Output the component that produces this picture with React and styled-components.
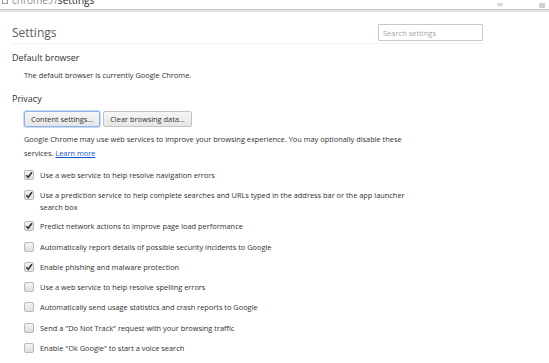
import React from 'react';
import styled, { createGlobalStyle } from 'styled-components';

const GlobalStyle = createGlobalStyle`
    html, body {
        margin: 0;
        padding: 0;
        background: #fff;
    }
    body {
        font-family: "Open Sans", "Noto Sans", sans-serif;
        color: #303030;
    }
`;

const AddressBar = styled.div`
    height: 9px;
    overflow: hidden;
    display: flex;
    align-items: flex-end;
    justify-content: space-between;
    padding: 0 4px 0 2px;
    border-bottom: 1px solid #c9c9c9;
`;

const Url = styled.div`
    font-size: 10px;
    line-height: 12px;
    margin-bottom: 3px;
    color: #8a8a8a;
    display: flex;
    align-items: center;
    gap: 4px;
    b {
        font-weight: 400;
        color: #222;
    }
`;

const ToolbarShadow = styled.div`
    height: 2px;
    background: #e4e4e4;
`;

const Page = styled.div`
    padding: 0 66px 0 12px;
`;

const Header = styled.header`
    display: flex;
    justify-content: space-between;
    align-items: center;
    padding: 12px 0 2px;
    border-bottom: 1px solid #eef4f4;
`;

const Title = styled.h1`
    margin: 0;
    font-size: 12px;
    line-height: 17px;
    font-weight: 400;
    color: #5c6166;
`;

const Search = styled.input`
    width: 105px;
    height: 17px;
    box-sizing: border-box;
    border: 1px solid #c8c8c8;
    border-radius: 1px;
    padding: 0 4px;
    font-family: inherit;
    font-size: 7.5px;
    &::placeholder {
        color: #a5a5a5;
    }
`;

const Section = styled.section`
    margin-top: ${(p) => p.$top}px;
`;

const SectionTitle = styled.h3`
    margin: 0;
    font-size: 9px;
    font-weight: 400;
    color: #303030;
    line-height: 14px;
`;

const SectionBody = styled.div`
    padding-left: 12px;
    font-size: 7.4px;
`;

const Text = styled.p`
    margin: ${(p) => p.$mt || 0}px 0 0;
    line-height: 14px;
    font-size: 7.4px;
    max-width: 390px;
`;

const Link = styled.a`
    color: #1155cc;
    text-decoration: underline;
`;

const Buttons = styled.div`
    display: flex;
    gap: 3px;
    margin-top: 5px;
`;

const Button = styled.button`
    height: 16px;
    padding: 0 6px;
    font-family: inherit;
    font-size: 7.4px;
    color: #333;
    border-radius: 2px;
    border: 1px solid ${(p) => (p.$focused ? '#8fb0e8' : '#c4c4c4')};
    background: linear-gradient(#f6f6f6, #e6e6e6);
    box-shadow: ${(p) => (p.$focused ? '0 0 0 1px #c9dbf5' : 'none')};
`;

const Options = styled.div`
    display: flex;
    flex-direction: column;
    gap: 6px;
    margin-top: 8px;
`;

const Option = styled.label`
    display: flex;
    align-items: flex-start;
    gap: 6px;
    min-height: 14.3px;
    font-size: 7.4px;
    line-height: 12px;
    max-width: 384px;
    span:last-child {
        padding-top: 1px;
    }
`;

const Box = styled.span`
    flex: 0 0 auto;
    width: 8px;
    height: 8px;
    margin-top: 2px;
    border: 1px solid #b9b9b9;
    border-radius: 2px;
    background: linear-gradient(#f4f4f4, #dedede);
    display: flex;
    align-items: center;
    justify-content: center;
`;

function Checkbox({ checked }) {
    return (
        <Box>
            {checked && (
                <svg width="8" height="8" viewBox="0 0 8 8">
                    <path d="M1.2 4.2 L3.2 6.3 L6.9 1.2" fill="none" stroke="#333" strokeWidth="1.6" />
                </svg>
            )}
        </Box>
    );
}

const options = [
    ['Use a web service to help resolve navigation errors', true],
    ['Use a prediction service to help complete searches and URLs typed in the address bar or the app launcher search box', true],
    ['Predict network actions to improve page load performance', true],
    ['Automatically report details of possible security incidents to Google', false],
    ['Enable phishing and malware protection', true],
    ['Use a web service to help resolve spelling errors', false],
    ['Automatically send usage statistics and crash reports to Google', false],
    ['Send a "Do Not Track" request with your browsing traffic', false],
    ['Enable "Ok Google" to start a voice search', false],
];

export default function App() {
    return (
        <>
            <GlobalStyle />
            <AddressBar>
                <Url>
                    <svg width="6" height="8" viewBox="0 0 6 8">
                        <rect x="0.5" y="0.5" width="5" height="7" fill="#fff" stroke="#999" />
                    </svg>
                    <span>chrome://<b>settings</b></span>
                </Url>
                <svg width="50" height="6" viewBox="0 0 50 6">
                    <path d="M2 0 L3 4 L5 2.6 L7 4 L8 0 Z" fill="#d9d9d9" />
                    <rect x="44" y="0" width="6" height="5" rx="1" fill="#cfcfcf" />
                </svg>
            </AddressBar>
            <ToolbarShadow />
            <Page>
                <Header>
                    <Title>Settings</Title>
                    <Search placeholder="Search settings" />
                </Header>
                <Section $top={7}>
                    <SectionTitle>Default browser</SectionTitle>
                    <SectionBody>
                        <Text $mt={3}>The default browser is currently Google Chrome.</Text>
                    </SectionBody>
                </Section>
                <Section $top={10}>
                    <SectionTitle>Privacy</SectionTitle>
                    <SectionBody>
                        <Buttons>
                            <Button $focused>Content settings...</Button>
                            <Button>Clear browsing data...</Button>
                        </Buttons>
                        <Text $mt={5}>
                            Google Chrome may use web services to improve your browsing experience. You may optionally disable these services. <Link href="#">Learn more</Link>
                        </Text>
                        <Options>
                            {options.map(([label, checked]) => (
                                <Option key={label}>
                                    <Checkbox checked={checked} />
                                    <span>{label}</span>
                                </Option>
                            ))}
                        </Options>
                    </SectionBody>
                </Section>
            </Page>
        </>
    );
}
